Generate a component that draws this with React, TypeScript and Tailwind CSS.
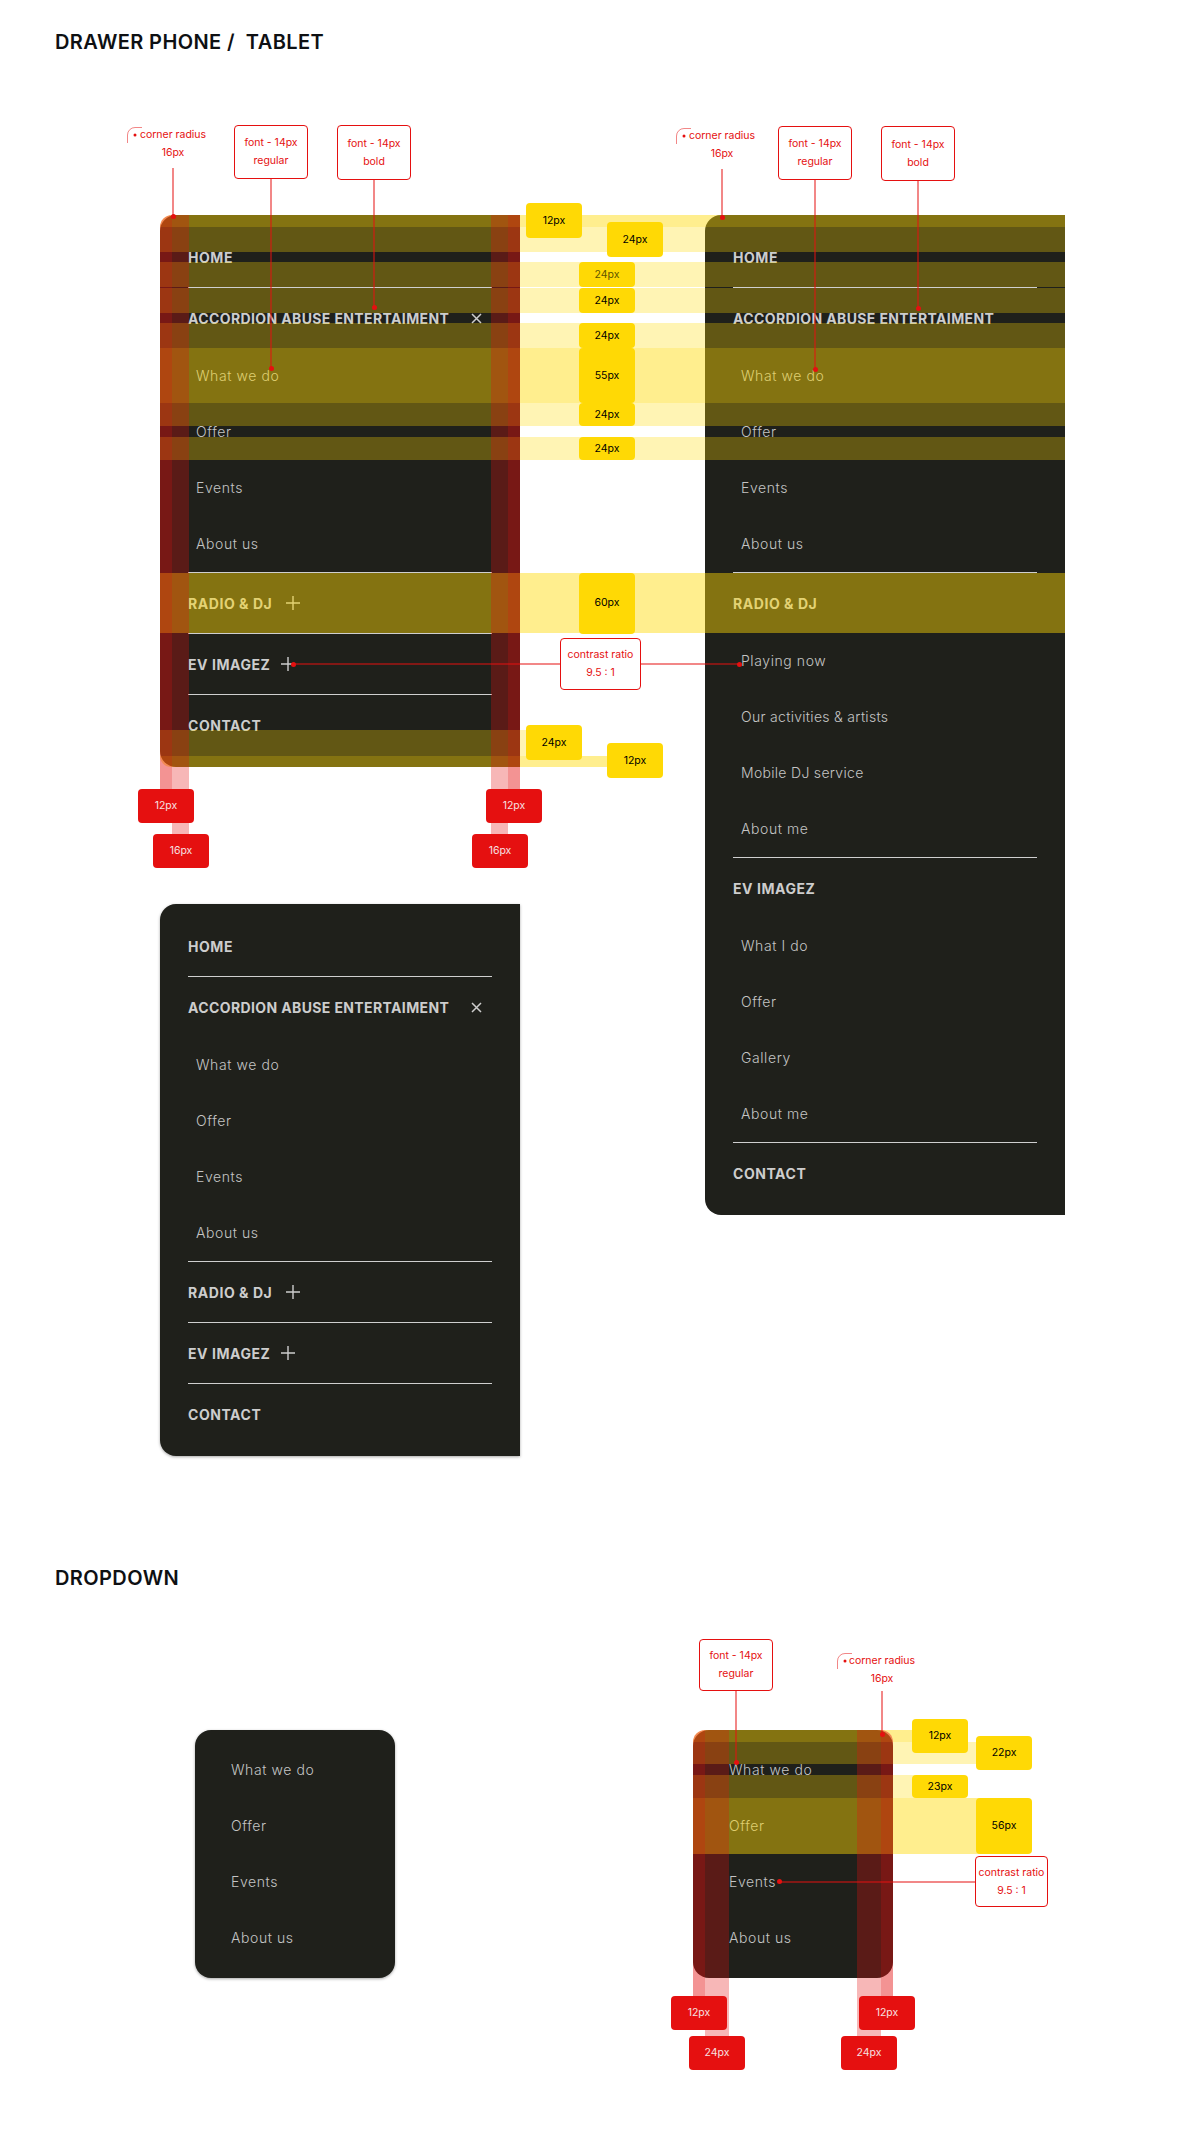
import React from "react";

const DOT = "w-[5px] h-[5px] rounded-full bg-[#e51010] shrink-0 relative";
const LINE = "bg-[#e51010]/50 shrink-0";

function Hr() {
  return <div className="h-px bg-[#cfcfcf]" />;
}

function Head({ label, tight, children }: { label: string; tight?: boolean; children?: React.ReactNode }) {
  return (
    <div className={"h-[60px] flex items-center text-[14px] font-bold text-[#cdcdcd] " + (tight ? "tracking-[0.38px]" : "tracking-[0.55px]")}>
      <span className="whitespace-nowrap">{label}</span>
      {children}
    </div>
  );
}

function Sub({ label, tight }: { label: string; tight?: boolean }) {
  return (
    <div className={"h-[56px] flex items-center pl-2 pb-px text-[14px] font-light text-[#c4c4c4] " + (tight ? "tracking-[0.3px]" : "tracking-[0.58px]")}>{label}</div>
  );
}

function Plus({ className }: { className: string }) {
  return (
    <svg className={className} width="14" height="14" viewBox="0 0 14 14" fill="none" stroke="#cdcdcd" strokeWidth="1.4">
      <path d="M7 0v14M0 7h14" />
    </svg>
  );
}

function Cross() {
  return (
    <svg className="ml-auto mr-[10px]" width="11" height="11" viewBox="0 0 11 11" fill="none" stroke="#cdcdcd" strokeWidth="1.5">
      <path d="M1 1l9 9M10 1l-9 9" />
    </svg>
  );
}

function Corner({ className }: { className: string }) {
  return (
    <svg className={className} width="16" height="16" viewBox="0 0 16 16" fill="none">
      <path d="M0.5 16V8a7.5 7.5 0 0 1 7.5-7.5h7" stroke="#e51010" strokeOpacity="0.5" />
      <circle cx="8" cy="8" r="1.5" fill="#e51010" />
    </svg>
  );
}

function SubList({ labels }: { labels: string[] }) {
  return (
    <>
      {labels.map((l) => (
        <Sub key={l} label={l} tight={l.length > 15} />
      ))}
    </>
  );
}

function Collapsed() {
  return (
    <>
      <Head label="HOME" />
      <Hr />
      <Head label="ACCORDION ABUSE ENTERTAIMENT" tight>
        <Cross />
      </Head>
      <SubList labels={["What we do", "Offer", "Events", "About us"]} />
      <Hr />
      <Head label="RADIO & DJ">
        <Plus className="ml-[14px]" />
      </Head>
      <Hr />
      <Head label="EV IMAGEZ">
        <Plus className="ml-[11px]" />
      </Head>
      <Hr />
      <Head label="CONTACT" />
    </>
  );
}

function Expanded() {
  return (
    <>
      <Head label="HOME" />
      <Hr />
      <Head label="ACCORDION ABUSE ENTERTAIMENT" tight />
      <SubList labels={["What we do", "Offer", "Events", "About us"]} />
      <Hr />
      <Head label="RADIO & DJ" />
      <SubList labels={["Playing now", "Our activities & artists", "Mobile DJ service", "About me"]} />
      <Hr />
      <Head label="EV IMAGEZ" />
      <SubList labels={["What I do", "Offer", "Gallery", "About me"]} />
      <Hr />
      <Head label="CONTACT" />
    </>
  );
}

function Dropdown({ className }: { className: string }) {
  return (
    <div className={"w-[200px] h-[248px] rounded-[16px] bg-[#1f201b] py-3 pl-[28px] " + className}>
      <SubList labels={["What we do", "Offer", "Events", "About us"]} />
    </div>
  );
}

function Heading({ text }: { text: string }) {
  return (
    <div className="h-[28px] pl-[55px] flex items-center text-[20px] font-semibold tracking-[0.4px] text-[#0e1013] whitespace-pre">{text}</div>
  );
}

/* yellow measure label */
function Y({ className, children }: { className: string; children: React.ReactNode }) {
  return (
    <div className={"relative z-10 shrink-0 w-[56px] bg-[#ffd905] rounded-[4px] flex items-center justify-center text-[10.5px] text-black " + className}>
      {children}
    </div>
  );
}

/* a translucent spacing band, holding its measure label */
function Band({ className, children }: { className: string; children?: React.ReactNode }) {
  return <div className={"flex items-center shrink-0 " + className}>{children}</div>;
}

/* a translucent side stripe that runs down into its red label */
function Stripe({ className, bar, offset, text }: { className: string; bar: string; offset: string; text: string }) {
  return (
    <div className={"shrink-0 " + className}>
      <div className={bar} />
      <div className={"relative z-10 w-[56px] h-[34px] bg-[#e51010] rounded-[4px] flex items-center justify-center text-[10.5px] text-[#f6e0e0] " + offset}>
        {text}
      </div>
    </div>
  );
}

function NoteBox({ className, lines }: { className: string; lines: string[] }) {
  return (
    <div className={"shrink-0 bg-white border border-[#e51010] rounded-[4px] flex flex-col items-center justify-center text-[10.5px] leading-[18px] text-[#e51010] whitespace-nowrap " + className}>
      {lines.map((l) => (
        <span key={l}>{l}</span>
      ))}
    </div>
  );
}

/* boxed note with its leader line running down to a dot */
function BoxNote({ className, box, line, lines }: { className: string; box: string; line: string; lines: string[] }) {
  return (
    <div className={"absolute w-[74px] flex flex-col items-center " + className}>
      <NoteBox className={"w-full " + box} lines={lines} />
      <div className={LINE + " w-[2px] " + line} />
      <div className={DOT + " -mt-[3px]"} />
    </div>
  );
}

/* corner radius note */
function CornerNote({ className, iconClass, line }: { className: string; iconClass: string; line: string }) {
  return (
    <div className={"absolute flex items-start " + className}>
      <Corner className={"shrink-0 mt-[1px] " + iconClass} />
      <div className="w-[70px] flex flex-col items-center text-[10.5px] leading-[18px] text-[#e51010] whitespace-nowrap">
        <span>corner radius</span>
        <span>16px</span>
        <div className={LINE + " w-[2px] " + line} />
        <div className={DOT + " -mt-[3px]"} />
      </div>
    </div>
  );
}

const STRONG = "bg-[#ffd905]/45";
const LIGHT = "bg-[#ffd905]/30";

export default function App() {
  return (
    <div className="relative w-[1200px] h-[2133px] overflow-hidden bg-white font-['Inter',sans-serif]">
      <div className="pt-[28px]">
        <Heading text="DRAWER PHONE /  TABLET" />
      </div>

      <div className="flex items-start gap-[185px] pl-[160px] mt-[159px]">
        <div className="flex flex-col gap-[137px]">
          <div className="w-[360px] rounded-l-[16px] bg-[#1f201b] px-[28px] py-3">
            <Collapsed />
          </div>
          <div className="w-[360px] rounded-l-[16px] bg-[#1f201b] px-[28px] py-3 shadow-[0_1px_3px_rgba(0,0,0,0.35)]">
            <Collapsed />
          </div>
        </div>
        <div className="w-[360px] rounded-l-[16px] bg-[#1f201b] px-[28px] py-3">
          <Expanded />
        </div>
      </div>

      <div className="mt-[108px]">
        <Heading text="DROPDOWN" />
      </div>

      <div className="flex gap-[298px] pl-[195px] mt-[138px]">
        <Dropdown className="shadow-[0_1px_3px_rgba(0,0,0,0.35)]" />
        <Dropdown className="" />
      </div>

      {/* drawer spacing overlay */}
      <div className="absolute left-[160px] top-[215px] w-[905px] flex flex-col">
        <Band className={"h-[12px] rounded-tl-[16px] " + STRONG}>
          <Y className="ml-[366px] -mt-px h-[35px]">12px</Y>
        </Band>
        <Band className={"h-[25px] " + LIGHT}>
          <Y className="ml-[447px] h-[35px]">24px</Y>
        </Band>
        <Band className={"h-[25px] mt-[10px] " + LIGHT}>
          <Y className="ml-[419px] h-[25px] !text-[#5f5500]">24px</Y>
        </Band>
        <Band className={"h-[25px] mt-px " + LIGHT}>
          <Y className="ml-[419px] h-[25px]">24px</Y>
        </Band>
        <Band className={"h-[25px] mt-[10px] " + LIGHT}>
          <Y className="ml-[419px] h-[25px]">24px</Y>
        </Band>
        <Band className={"h-[55px] " + STRONG}>
          <Y className="ml-[419px] h-[55px]">55px</Y>
        </Band>
        <Band className={"h-[23px] " + LIGHT}>
          <Y className="ml-[419px] h-[23px]">24px</Y>
        </Band>
        <Band className={"h-[23px] mt-[11px] " + LIGHT}>
          <Y className="ml-[419px] h-[23px]">24px</Y>
        </Band>
        <Band className={"h-[60px] mt-[113px] " + STRONG}>
          <Y className="ml-[419px] h-[61px]">60px</Y>
        </Band>
        <Band className={"h-[26px] w-[400px] mt-[97px] " + LIGHT}>
          <Y className="ml-[366px] -mt-px h-[35px]">24px</Y>
        </Band>
        <Band className={"h-[11px] w-[460px] rounded-bl-[16px] " + STRONG}>
          <Y className="ml-[447px] -mt-[2px] h-[35px]">12px</Y>
        </Band>
      </div>

      {/* drawer side stripes */}
      <div className="absolute left-[160px] top-[215px] flex">
        <Stripe className="w-[12px]" bar="h-[574px] bg-[#e51010]/45 rounded-tl-[12px]" offset="-ml-[22px]" text="12px" />
        <Stripe className="w-[17px]" bar="h-[619px] bg-[#e51010]/30" offset="-ml-[19px]" text="16px" />
        <div className="w-[302px] shrink-0" />
        <Stripe className="w-[17px]" bar="h-[619px] bg-[#e51010]/30" offset="-ml-[19px]" text="16px" />
        <Stripe className="w-[12px]" bar="h-[574px] bg-[#e51010]/45" offset="-ml-[22px]" text="12px" />
      </div>

      {/* left drawer notes */}
      <CornerNote className="left-[127px] top-[126px]" iconClass="-mr-[5px]" line="mt-[6px] h-[49px]" />
      <BoxNote className="left-[234px] top-[125px]" box="h-[54px]" line="h-[190px]" lines={["font - 14px", "regular"]} />
      <BoxNote className="left-[337px] top-[125px]" box="h-[55px]" line="h-[128px]" lines={["font - 14px", "bold"]} />

      {/* contrast note */}
      <div className="absolute left-[291px] top-[638px] h-[52px] flex items-center">
        <div className={DOT + " -mr-[2px]"} />
        <div className={LINE + " h-[2px] w-[266px]"} />
        <NoteBox className="w-[81px] h-[52px]" lines={["contrast ratio", "9.5 : 1"]} />
        <div className={LINE + " h-[2px] w-[98px]"} />
        <div className={DOT + " -ml-[2px]"} />
      </div>

      {/* right drawer notes */}
      <CornerNote className="left-[676px] top-[127px]" iconClass="-mr-[5px]" line="mt-[6px] h-[49px]" />
      <BoxNote className="left-[778px] top-[126px]" box="h-[54px]" line="h-[190px]" lines={["font - 14px", "regular"]} />
      <BoxNote className="left-[881px] top-[126px]" box="h-[55px]" line="h-[128px]" lines={["font - 14px", "bold"]} />

      {/* dropdown spacing overlay */}
      <div className="absolute left-[693px] top-[1730px] flex flex-col">
        <Band className={"h-[12px] w-[225px] rounded-tl-[16px] " + STRONG}>
          <Y className="ml-[219px] h-[34px]">12px</Y>
        </Band>
        <Band className={"h-[22px] w-[290px] " + LIGHT}>
          <Y className="ml-[283px] h-[34px]">22px</Y>
        </Band>
        <Band className={"h-[23px] w-[225px] mt-[11px] " + LIGHT}>
          <Y className="ml-[219px] h-[23px]">23px</Y>
        </Band>
        <Band className={"h-[56px] w-[290px] " + STRONG}>
          <Y className="ml-[283px] h-[56px]">56px</Y>
        </Band>
      </div>

      {/* dropdown side stripes */}
      <div className="absolute left-[693px] top-[1730px] flex">
        <Stripe className="w-[12px]" bar="h-[266px] bg-[#e51010]/45 rounded-tl-[12px]" offset="-ml-[22px]" text="12px" />
        <Stripe className="w-[24px]" bar="h-[306px] bg-[#e51010]/30" offset="-ml-[16px]" text="24px" />
        <div className="w-[128px] shrink-0" />
        <Stripe className="w-[24px]" bar="h-[306px] bg-[#e51010]/30" offset="-ml-[16px]" text="24px" />
        <Stripe className="w-[12px]" bar="h-[266px] bg-[#e51010]/45 rounded-tr-[12px]" offset="-ml-[22px]" text="12px" />
      </div>

      {/* dropdown notes */}
      <BoxNote className="left-[699px] top-[1639px]" box="h-[52px]" line="h-[72px]" lines={["font - 14px", "regular"]} />
      <CornerNote className="left-[837px] top-[1652px]" iconClass="-mr-[6px]" line="mt-[3px] h-[44px]" />

      <div className="absolute left-[777px] top-[1856px] h-[51px] flex items-center">
        <div className={DOT + " -mr-[2px]"} />
        <div className={LINE + " h-[2px] w-[195px]"} />
        <NoteBox className="w-[73px] h-[51px]" lines={["contrast ratio", "9.5 : 1"]} />
      </div>
    </div>
  );
}
